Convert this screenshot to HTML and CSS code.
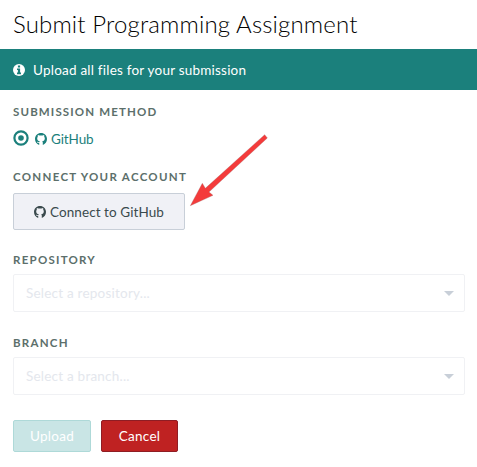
FILE: index.html
```html
<!DOCTYPE html>
<html lang="en">
<head>
<meta charset="utf-8">
<title>Submit Programming Assignment</title>
<link rel="stylesheet" href="styles.css">
</head>
<body>
<svg class="defs" width="0" height="0" aria-hidden="true">
  <symbol id="github" viewBox="0 0 12 12">
    <path d="M6 0C2.600 0 0 2.600 0 6c0 2.800 1.700 5 4.200 5.900V9.900c-1.600.3-2-.6-2.300-1.200.9-.2 1.200.9 2.400.5.1-.4.300-.7.500-.9C3.200 8 2.200 7.100 2.200 5.500c0-.7.2-1.200.6-1.700-.2-.5-.1-1.300.1-1.900.600 0 1.200.3 1.700.7.900-.2 1.900-.2 2.800 0 .5-.4 1.100-.7 1.700-.7.200.6.3 1.400.1 1.900.4.500.6 1 .6 1.700C9.800 7.100 8.800 8 7.200 8.300c.4.400.6.800.6 1.400v2.200C10.300 11 12 8.800 12 6c0-3.400-2.600-6-6-6z"/>
  </symbol>
</svg>
<h1 class="title">Submit Programming Assignment</h1>
<div class="notice">
  <svg class="info" viewBox="0 0 12 12"><circle cx="6" cy="6" r="6"/><path d="M4.900 1.600h2.200v1.900H4.900zM4 4.500h3.100v4h.9v1.700H4V8.500h.9V6H4z"/></svg>
  <span class="notice-text">Upload all files for your submission</span>
</div>
<form class="form">
  <section class="field method">
    <h2 class="label l-method">Submission Method</h2>
    <div class="choice">
      <svg class="radio" viewBox="0 0 16 16"><circle class="ring" cx="8" cy="8" r="6.600"/><circle class="dot" cx="8" cy="8" r="2.800"/></svg>
      <svg class="icon"><use href="#github"/></svg>
      <span class="choice-text">GitHub</span>
    </div>
  </section>
  <section class="field account">
    <h2 class="label l-account">Connect Your Account</h2>
    <button type="button" class="connect"><svg class="icon"><use href="#github"/></svg><span>Connect to GitHub</span></button>
    <svg class="arrow" viewBox="0 0 300 270"><path d="M254 29 262 39 87 201 99 211 31 242 67 175 76 190z"/></svg>
  </section>
  <section class="field">
    <h2 class="label l-repo">Repository</h2>
    <div class="select"><span>Select a repository...</span><i class="caret"></i></div>
  </section>
  <section class="field">
    <h2 class="label l-branch">Branch</h2>
    <div class="select"><span>Select a branch...</span><i class="caret"></i></div>
  </section>
  <div class="actions">
    <button type="button" class="btn upload" disabled>Upload</button>
    <button type="button" class="btn cancel">Cancel</button>
  </div>
</form>
</body>
</html>
```
FILE: styles.css
```css
* { box-sizing: border-box; }
body { margin: 0; background: #fff; color: #3a4a4d; font: 13.500px/20px Lato, "Liberation Sans", sans-serif; overflow: hidden; }
.defs { position: absolute; }
.title { margin: 0; height: 49px; padding: 9px 13px 0; font-size: 24px; line-height: 30px; font-weight: 300; letter-spacing: .14px; color: #000; white-space: nowrap; }
.notice { height: 41px; padding-left: 13px; display: flex; align-items: center; background: #1b807c; color: #fff; }
.notice-text { letter-spacing: .22px; }
.info { width: 12px; height: 12px; margin-right: 8px; fill: #fff; }
.info path { fill: #1b807c; }
.form { padding: 14px 12px 0 13px; }
.field { position: relative; height: 83px; }
.method { height: 65px; }
.label { margin: 0; height: 16px; font-size: 11.500px; line-height: 16px; font-weight: 700; letter-spacing: 1.250px; color: #5c6f6b; text-transform: uppercase; white-space: nowrap; }
.l-method { letter-spacing: 1.140px; }
.l-account { letter-spacing: 1.300px; }
.choice { display: flex; align-items: center; height: 20px; margin-top: 9px; color: #1b807c; }
.choice-text { letter-spacing: -.1px; }
.radio { width: 16px; height: 16px; margin: -3px 6px 0 0; }
.ring { fill: none; stroke: #1b807c; stroke-width: 2.200; }
.dot { fill: #1b807c; }
.icon { width: 12px; height: 12px; margin-right: 4px; fill: currentColor; }
.connect { display: flex; align-items: center; width: 172px; height: 37px; margin-top: 8px; padding: 0 0 0 20px; border: 1px solid #c8cfd8; border-radius: 2px; background: #f0f1f6; color: #3a4a4d; font: inherit; letter-spacing: .08px; }
.arrow { position: absolute; left: 167px; top: -44px; width: 100px; height: 90px; fill: #f43b3b; stroke: #a06a6a; stroke-width: 1; }
.select { display: flex; align-items: center; justify-content: space-between; height: 38px; margin-top: 6px; padding: 0 10px 0 12px; border: 1px solid #f0f1f4; border-radius: 2px; color: #e4e7ed; letter-spacing: .22px; }
.caret { border: 5px solid transparent; border-top-color: #c8cfd8; border-bottom: 0; }
.actions { display: flex; gap: 10px; padding-top: 2px; }
.btn { height: 32px; padding: 0; border: 1px solid; border-radius: 2px; font: inherit; letter-spacing: .3px; color: #fff; }
.upload { width: 78px; background: #c9e5e5; border-color: #aed9d8; }
.cancel { width: 77px; background: #bf2222; border-color: #8f1d24; }
```
